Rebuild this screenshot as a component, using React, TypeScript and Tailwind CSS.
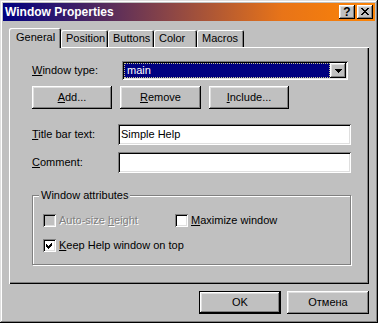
import React from "react";

const raised =
  "shadow-[inset_-1px_-1px_#000,inset_1px_1px_#fff,inset_-2px_-2px_#808080,inset_2px_2px_#dfdfdf]";
const sunken =
  "shadow-[inset_1px_1px_#808080,inset_-1px_-1px_#fff,inset_2px_2px_#000,inset_-2px_-2px_#dfdfdf]";

function U({ children }: { children: React.ReactNode }) {
  return <span className="underline decoration-1 underline-offset-[1px]">{children}</span>;
}

function Btn({ children, w, def }: { children: React.ReactNode; w: string; def?: boolean }) {
  if (def) {
    return (
      <div className={`${w} h-[23px] border border-black bg-[#c0c0c0]`}>
        <div className={`w-full h-full flex items-center justify-center ${raised}`}>{children}</div>
      </div>
    );
  }
  return (
    <div className={`${w} h-[23px] flex items-center justify-center bg-[#c0c0c0] ${raised}`}>
      {children}
    </div>
  );
}

function Check({ checked, disabled }: { checked?: boolean; disabled?: boolean }) {
  return (
    <div
      className={`w-[13px] h-[13px] shrink-0 flex items-center justify-center ${sunken} ${
        disabled ? "bg-[#c0c0c0]" : "bg-white"
      }`}
    >
      {checked && (
        <svg width="7" height="7" viewBox="0 0 7 7" shapeRendering="crispEdges">
          <polygon points="0,2 2,4 6,0 6,3 2,7 0,5" fill="#000" />
        </svg>
      )}
    </div>
  );
}

function Tab({ label, w, selected }: { label: string; w: string; selected?: boolean }) {
  if (selected) {
    return (
      <div
        className={`${w} h-[20px] mb-[-1px] relative z-10 bg-[#c0c0c0] rounded-t-[2px] pl-[7px] pt-[3px] shadow-[inset_1px_1px_#fff,inset_-1px_0_#000,inset_-2px_0_#808080]`}
      >
        {label}
      </div>
    );
  }
  return (
    <div
      className={`${w} h-[17px] bg-[#c0c0c0] rounded-t-[2px] pl-[5px] pt-[2px] shadow-[inset_1px_1px_#fff,inset_-1px_0_#000,inset_-2px_0_#808080]`}
    >
      {label}
    </div>
  );
}

export default function App() {
  return (
    <div
      className="w-[378px] h-[323px] bg-[#c0c0c0] p-[3px] text-[11px] leading-[13px] text-black shadow-[inset_-1px_-1px_#000,inset_1px_1px_#dfdfdf,inset_-2px_-2px_#808080,inset_2px_2px_#fff]"
      style={{ fontFamily: '"Liberation Sans", Arial, sans-serif' }}
    >
      {/* Title bar */}
      <div className="h-[18px] flex items-center pl-[2px] pr-[2px] bg-[linear-gradient(to_right,#000080,#8c4646_45%,#e87418_75%,#fc8406)]">
        <div className="flex-1 text-white font-bold text-[12px] leading-[14px]">Window Properties</div>
        <div className="flex gap-[2px]">
          <div className={`w-[16px] h-[14px] bg-[#c0c0c0] ${raised} flex items-center justify-center font-bold text-[12px] leading-[12px] pb-[1px]`}>
            ?
          </div>
          <div className={`w-[16px] h-[14px] bg-[#c0c0c0] ${raised} flex items-center justify-center pb-[1px]`}>
            <svg width="8" height="7" viewBox="0 0 8 7" shapeRendering="crispEdges">
              <path
                d="M0 0h2v1h1v1h2v-1h1v-1h2v1h-1v1h-1v1h-1v1h1v1h1v1h1v1h-2v-1h-1v-1h-2v1h-1v1h-2v-1h1v-1h1v-1h1v-1h-1v-1h-1v-1h-1z"
                fill="#000"
              />
            </svg>
          </div>
        </div>
      </div>

      {/* Body */}
      <div className="px-[6px] pt-[7px]">
        {/* Tabs */}
        <div className="h-[19px] flex items-end">
          <Tab label="General" w="w-[52px]" selected />
          <Tab label="Position" w="w-[47px]" />
          <Tab label="Buttons" w="w-[46px]" />
          <Tab label="Color" w="w-[43px]" />
          <Tab label="Macros" w="w-[47px]" />
        </div>

        {/* Panel */}
        <div className="h-[237px] pl-[23px] pt-[14px] shadow-[inset_1px_1px_#fff,inset_-1px_-1px_#000,inset_-2px_-2px_#808080]">
          <div className="flex items-center h-[19px]">
            <div className="w-[90px]">
              <U>W</U>indow type:
            </div>
            <div className={`w-[226px] h-[19px] bg-white ${sunken} flex items-center p-[2px]`}>
              <div className="flex-1 h-[15px] bg-[#000080] text-white pl-[3px] leading-[14px] outline-1 outline-dotted outline-[#c8c890] -outline-offset-1">
                main
              </div>
              <div className={`w-[16px] h-[15px] bg-[#c0c0c0] ${raised} flex items-center justify-center`}>
                <svg width="7" height="4" viewBox="0 0 7 4" shapeRendering="crispEdges">
                  <polygon points="0,0 7,0 3.5,4" fill="#000" />
                </svg>
              </div>
            </div>
          </div>

          <div className="flex mt-[6px]">
            <Btn w="w-[80px]">
              <span>
                <U>A</U>dd...
              </span>
            </Btn>
            <div className="w-[8px]" />
            <Btn w="w-[81px]">
              <span>
                <U>R</U>emove
              </span>
            </Btn>
            <div className="w-[8px]" />
            <Btn w="w-[80px]">
              <span>
                <U>I</U>nclude...
              </span>
            </Btn>
          </div>

          <div className="flex items-center mt-[15px] h-[21px]">
            <div className="w-[86px]">
              <U>T</U>itle bar text:
            </div>
            <div className={`w-[233px] h-[21px] bg-white ${sunken} flex items-center pl-[3px]`}>Simple Help</div>
          </div>

          <div className="flex items-center mt-[7px] h-[21px]">
            <div className="w-[86px]">
              <U>C</U>omment:
            </div>
            <div className={`w-[233px] h-[21px] bg-white ${sunken}`} />
          </div>

          {/* Group box */}
          <div className="relative mt-[22px] w-[319px] h-[70px] border border-[#808080] shadow-[inset_1px_1px_#fff,1px_1px_#fff] pl-[10px] pt-[18px]">
            <div className="absolute -top-[7px] left-[6px] px-[2px] bg-[#c0c0c0]">Window attributes</div>
            <div className="flex items-center h-[13px]">
              <div className="w-[132px] flex items-center">
                <Check disabled />
                <span className="ml-[3px] text-[#808080] [text-shadow:1px_1px_#fff]">
                  Auto-size <U>h</U>eight
                </span>
              </div>
              <div className="flex items-center">
                <Check />
                <span className="ml-[3px]">
                  <U>M</U>aximize window
                </span>
              </div>
            </div>
            <div className="flex items-center h-[13px] mt-[12px]">
              <Check checked />
              <span className="ml-[3px]">
                <U>K</U>eep Help window on top
              </span>
            </div>
          </div>
        </div>

        {/* Bottom buttons */}
        <div className="flex justify-end gap-[6px] mt-[7px]">
          <Btn w="w-[82px]" def>
            OK
          </Btn>
          <Btn w="w-[82px]">Отмена</Btn>
        </div>
      </div>
    </div>
  );
}
